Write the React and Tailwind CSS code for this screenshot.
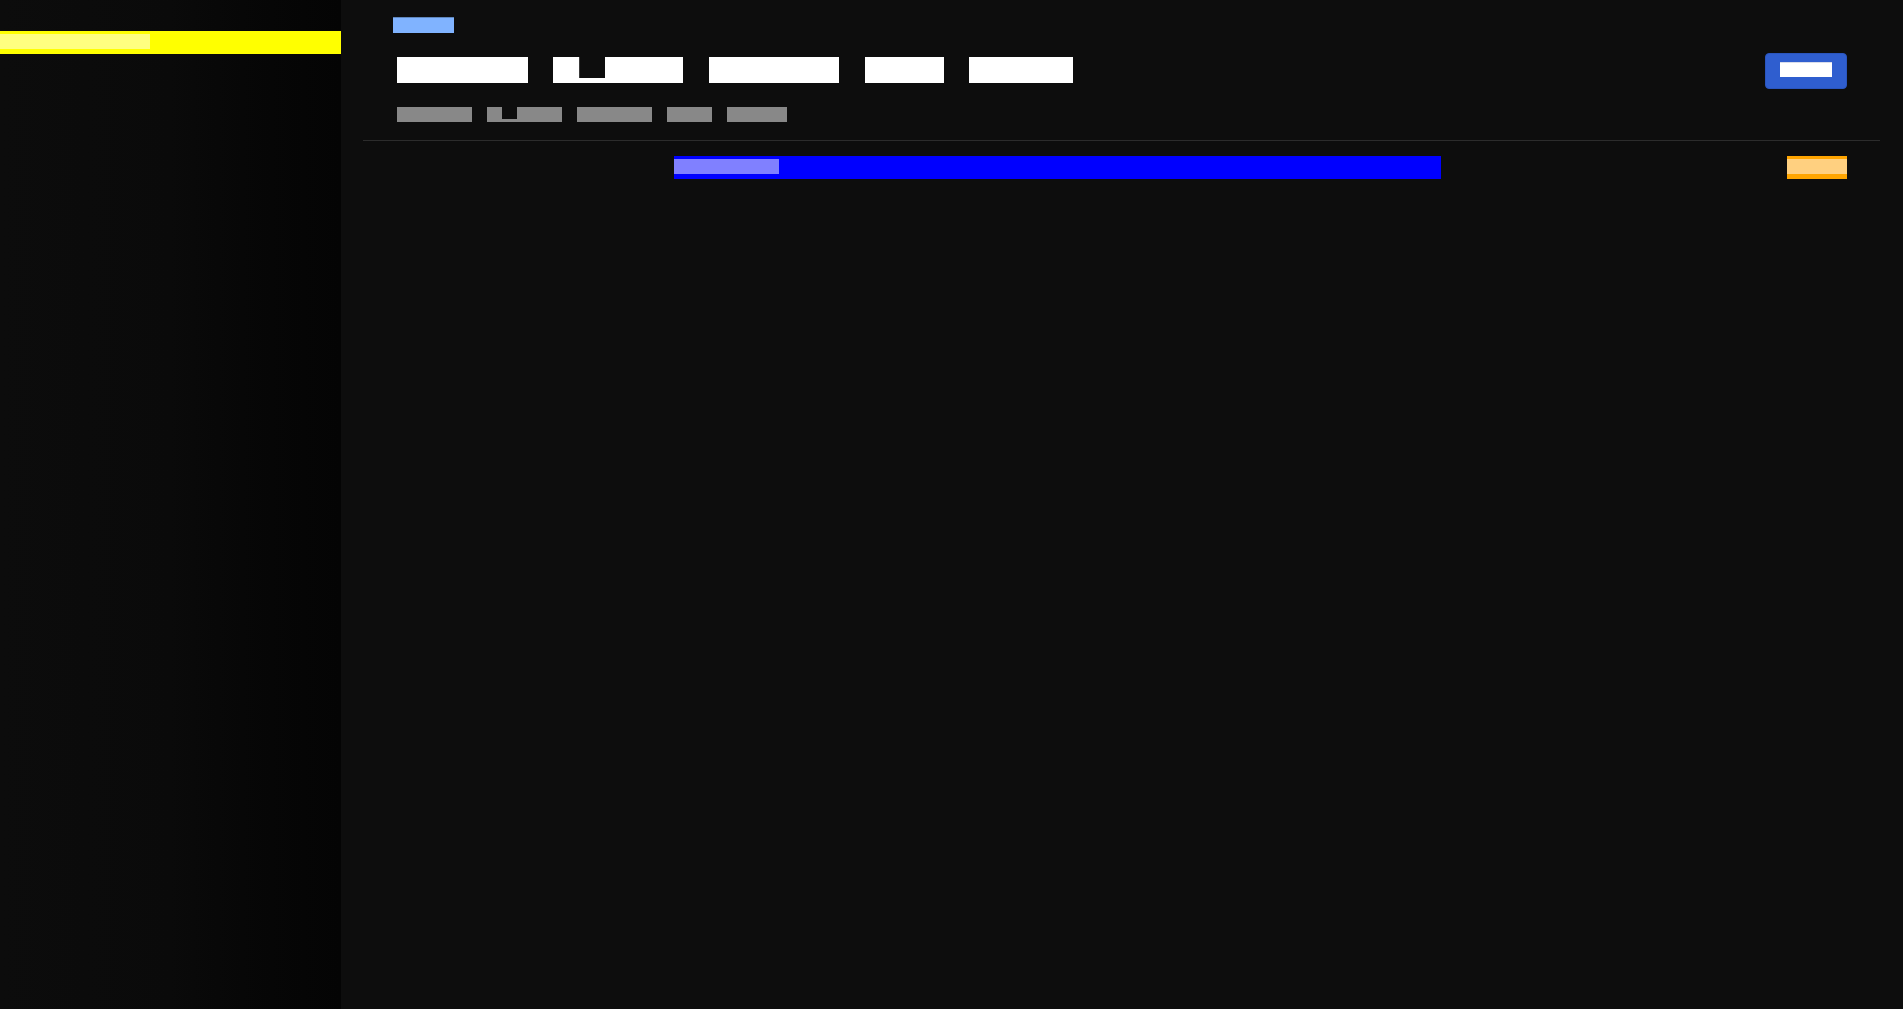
import React from "react";

function Block({ className = "", children }) {
  return <div className={className}>{children}</div>;
}

export default function App() {
  return (
    <div className="flex h-[1009px] w-full overflow-hidden bg-[#0d0d0d] font-['Liberation_Sans',sans-serif]">
      {/* Sidebar */}
      <aside className="flex w-[341px] shrink-0 flex-col bg-linear-to-r from-[#0c0c0c] via-[#0a0a0a] to-[#040404] pt-[31px]">
        <div className="h-[23px] w-full bg-[#ffff00] pt-[3px]">
          <div className="h-[15px] w-[150px] bg-[#ffff80]" />
        </div>
      </aside>

      {/* Main */}
      <main className="flex flex-1 flex-col pl-[22px] pr-[23px]">
        <header className="flex items-start justify-between border-b border-[#2c2c2c] pb-[18px]">
          <div className="flex flex-col">
            <div className="ml-[30px] mt-[17px] h-[16px] w-[61px] border-t border-[#5f86bd] bg-[#80b3ff]" />
            <div className="ml-[34px] mt-[24px] flex h-[26px] items-start">
              <Block className="h-[26px] w-[131px] bg-white" />
              <div className="ml-[25px] flex h-[26px] w-[130px] bg-white">
                <div className="ml-[26px] h-[21px] w-[26px] border-l border-[#3a3a3a] bg-[#0d0d0d]" />
              </div>
              <Block className="ml-[26px] h-[26px] w-[130px] bg-white" />
              <Block className="ml-[26px] h-[26px] w-[79px] bg-white" />
              <Block className="ml-[25px] h-[26px] w-[104px] bg-white" />
            </div>
            <div className="ml-[34px] mt-[24px] flex h-[15px] items-start gap-[15px]">
              <Block className="h-[15px] w-[75px] bg-[#888888]" />
              <div className="flex h-[15px] w-[75px] bg-[#888888]">
                <div className="ml-[15px] h-[12px] w-[15px] bg-[#0d0d0d]" />
              </div>
              <Block className="h-[15px] w-[75px] bg-[#888888]" />
              <Block className="h-[15px] w-[45px] bg-[#888888]" />
              <Block className="h-[15px] w-[60px] bg-[#888888]" />
            </div>
          </div>
          <button className="mr-[33px] mt-[53px] flex h-[36px] w-[82px] items-start justify-center rounded-[4px] border border-[#2a55bd] bg-[#2f5ecf] pt-[8px]">
            <div className="h-[15px] w-[52px] border-t border-[#d8dcea] bg-white" />
          </button>
        </header>

        <div className="mt-[15px] flex items-start">
          <div className="ml-[311px] h-[23px] w-[767px] bg-[#0000ff] pt-[3px]">
            <div className="h-[15px] w-[105px] bg-[#8080ff]" />
          </div>
          <div className="ml-auto mr-[33px] h-[23px] w-[60px] bg-[#ffa500] pt-[3px]">
            <div className="h-[15px] w-full bg-[#ffd080]" />
          </div>
        </div>
      </main>
    </div>
  );
}
